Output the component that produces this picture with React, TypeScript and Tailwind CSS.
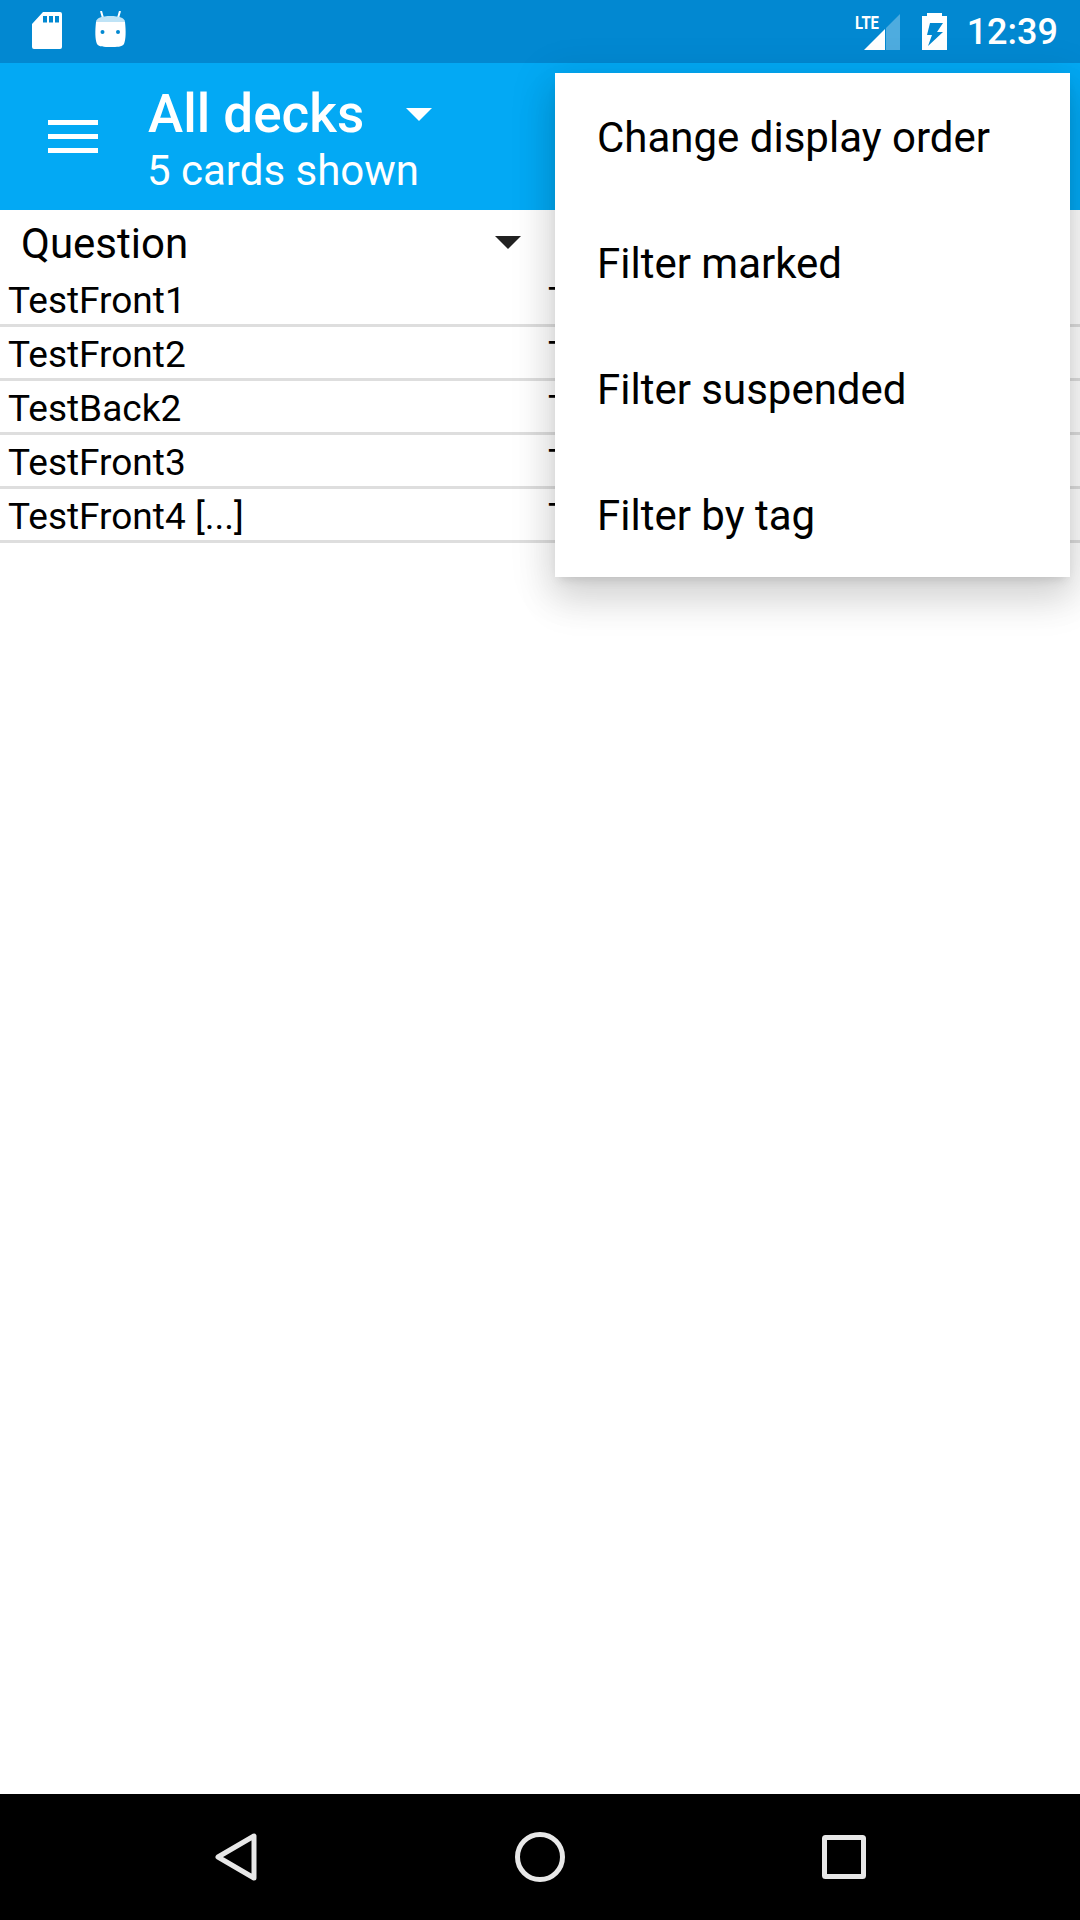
const rows = [
  { front: "TestFront1", back: "TestBack1" },
  { front: "TestFront2", back: "TestBack2" },
  { front: "TestBack2", back: "TestFront2" },
  { front: "TestFront3", back: "TestBack3" },
  { front: "TestFront4 [...]", back: "TestBack4" },
];

const menuItems = ["Change display order", "Filter marked", "Filter suspended", "Filter by tag"];

function StatusBar() {
  return (
    <div className="flex h-[63px] shrink-0 items-center bg-[#0288d1] pl-[32px] pr-[22px] text-white">
      <svg width="31" height="38" viewBox="0 0 31 38" className="mt-[-1px]">
        <path
          fill="#fff"
          fillRule="evenodd"
          d="M11 0H28a2 2 0 0 1 2 2V35a2 2 0 0 1-2 2H2a2 2 0 0 1-2-2V12ZM11 4V10.500H15V4ZM17 4V10.500H21V4ZM23 4V10.500H27V4Z"
        />
      </svg>
      <svg width="31" height="37" viewBox="0 0 31 37" className="ml-[32px] mt-[-4px]">
        <path d="M6 0 8 7M25 0 23 7" stroke="#fff" strokeWidth="2" />
        <path fill="#bfe3f6" d="M1 11C1 7 7 5 15.500 5S30 7 30 11V12H1Z" />
        <path
          fill="#fff"
          fillRule="evenodd"
          d="M1 11H30C31 20 31 28 29 33 27 36 22 36 15.500 36S4 36 2 33C0 28 0 20 1 11ZM7.500 19a2 2 0 1 0 0 4 2 2 0 0 0 0-4ZM23 19a2 2 0 1 0 0 4 2 2 0 0 0 0-4Z"
        />
      </svg>
      <div className="ml-auto flex items-center">
        <svg width="46" height="40" viewBox="0 -3 46 40" className="mt-[-2px]">
          <text x="0" y="15" fill="#fff" fontSize="19" fontWeight="700" fontFamily="Roboto, sans-serif" textLength="24" lengthAdjust="spacingAndGlyphs">
            LTE
          </text>
          <path fill="#fff" d="M9 36 30 15V36Z" />
          <path fill="#fff" fillOpacity="0.3" d="M31 14 45 0V36H31Z" />
        </svg>
        <svg width="25" height="37" viewBox="0 0 25 37" className="ml-[21px]">
          <path
            fill="#fff"
            fillRule="evenodd"
            d="M5 0H20V3H25V37H0V3H5ZM8 10 5 22H10L6 33 21 19H15L21 10Z"
          />
        </svg>
        <span className="ml-[20px] text-[36px] font-medium leading-none">12:39</span>
      </div>
    </div>
  );
}

function Toolbar() {
  return (
    <div className="flex h-[147px] shrink-0 items-center bg-[#03a9f4] pl-[48px] text-white">
      <div className="flex w-[50px] flex-col gap-[9px]">
        <div className="h-[5px] bg-white" />
        <div className="h-[5px] bg-white" />
        <div className="h-[5px] bg-white" />
      </div>
      <div className="ml-[50px] mt-[5px] flex flex-col">
        <div className="flex items-center">
          <span className="text-[53px] font-medium leading-[58px]">All decks</span>
          <svg width="26" height="13" viewBox="0 0 26 13" className="ml-[42px] mt-[2px]">
            <path fill="#fff" d="M0 0H26L13 13Z" />
          </svg>
        </div>
        <span className="ml-[-1px] mt-[5px] text-[42px] leading-[46px]">5 cards shown</span>
      </div>
    </div>
  );
}

function CardTable() {
  return (
    <div className="flex-1 bg-white text-black">
      <div className="flex h-[63px] items-center pl-[21px]">
        <span className="mt-[5px] w-[474px] text-[42px] leading-none">Question</span>
        <svg width="26" height="13" viewBox="0 0 26 13" className="mt-[2px]">
          <path fill="#212121" d="M0 0H26L13 13Z" />
        </svg>
      </div>
      {rows.map((row) => (
        <div key={row.front} className="flex h-[54px] items-center border-b-[3px] border-[#dedede] pt-[3px] text-[37px] leading-none">
          <span className="w-[548px] pl-[8px]">{row.front}</span>
          <span>{row.back}</span>
        </div>
      ))}
    </div>
  );
}

function OverflowMenu() {
  return (
    <div className="absolute left-[555px] top-[73px] w-[515px] bg-white shadow-[0_24px_36px_2px_rgba(0,0,0,0.1),0_8px_40px_6px_rgba(0,0,0,0.1),0_6px_10px_-4px_rgba(0,0,0,0.12)]">
      {menuItems.map((item) => (
        <div key={item} className="flex h-[126px] items-center pl-[42px] pt-[2px] text-[42px] text-black">
          {item}
        </div>
      ))}
    </div>
  );
}

function NavBar() {
  return (
    <div className="flex h-[126px] shrink-0 items-center bg-black pl-[215px]">
      <svg width="42" height="48" viewBox="0 0 42 48" fill="none" stroke="#e8e8e8" strokeWidth="5" strokeLinejoin="round">
        <path d="M3 24 39 3V45Z" />
      </svg>
      <svg width="50" height="50" viewBox="0 0 50 50" fill="none" stroke="#e8e8e8" strokeWidth="5" className="ml-[258px]">
        <circle cx="25" cy="25" r="22.500" />
      </svg>
      <svg width="44" height="44" viewBox="0 0 44 44" fill="none" stroke="#e8e8e8" strokeWidth="5" strokeLinejoin="round" className="ml-[257px]">
        <rect x="2.500" y="2.500" width="39" height="39" rx="1" />
      </svg>
    </div>
  );
}

export default function App() {
  return (
    <div className="relative flex h-[1920px] w-[1080px] flex-col overflow-hidden bg-white font-['Roboto',sans-serif]">
      <StatusBar />
      <Toolbar />
      <CardTable />
      <NavBar />
      <OverflowMenu />
    </div>
  );
}
